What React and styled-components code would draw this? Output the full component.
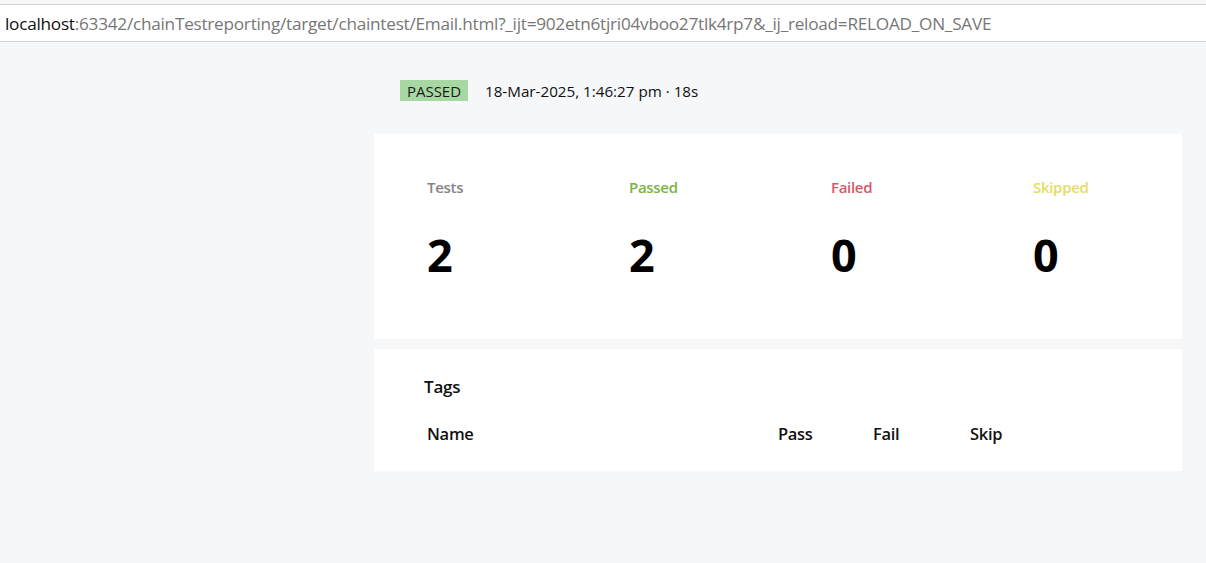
import React from "react";
import styled, { createGlobalStyle } from "styled-components";

const Global = createGlobalStyle`
  html, body { margin: 0; padding: 0; }
  body {
    background: #f6f7f9;
    font-family: "Open Sans", "Noto Sans", sans-serif;
    color: #111;
  }
`;

const Page = styled.div`
  width: 1206px;
  height: 563px;
  overflow: hidden;
  background: #f6f7f9;
`;

const AddressBar = styled.div`
  height: 36px;
  margin-top: 4px;
  background: #fff;
  border-top: 1px solid #d4d4d4;
  border-bottom: 1px solid #d4d4d4;
  display: flex;
  align-items: center;
  padding-left: 5px;
  font-family: "Open Sans", sans-serif;
  font-size: 17.2px;
  letter-spacing: -0.25px;
  color: #777;
  white-space: nowrap;
`;

const Host = styled.span`
  color: #111;
`;

const Main = styled.main`
  width: 808px;
  margin: 0 0 0 374px;
  padding-top: 38px;
  display: flex;
  flex-direction: column;
`;

const Header = styled.div`
  display: flex;
  align-items: center;
  gap: 17px;
  padding-left: 26px;
  height: 21px;
`;

const Badge = styled.span`
  display: inline-flex;
  align-items: center;
  justify-content: center;
  width: 68px;
  height: 21px;
  background: #a7d8a2;
  color: #1a1a1a;
  font-size: 15px;
  letter-spacing: 0;
`;

const Meta = styled.span`
  font-size: 15.2px;
  letter-spacing: 0;
  color: #111;
`;

const Card = styled.section`
  background: #fff;
  margin-top: ${(p) => p.$gap}px;
  height: ${(p) => p.$h}px;
  box-sizing: border-box;
`;

const StatGrid = styled.div`
  display: grid;
  grid-template-columns: repeat(4, 1fr);
  padding-top: 43px;
`;

const Stat = styled.div`
  padding-left: 53px;
  display: flex;
  flex-direction: column;
`;

const StatLabel = styled.div`
  font-size: 15px;
  font-weight: 600;
  color: ${(p) => p.$color};
  letter-spacing: -0.3px;
  height: 20px;
  line-height: 20px;
`;

const StatValue = styled.div`
  margin-top: 28px;
  font-size: 45px;
  font-weight: 700;
  line-height: 60px;
  color: #000;
`;

const TagsInner = styled.div`
  padding: 26px 0 0 50px;
`;

const TagsTitle = styled.h3`
  margin: 0;
  font-size: 17px;
  font-weight: 600;
  letter-spacing: -0.2px;
  line-height: 24px;
`;

const TableHead = styled.div`
  display: grid;
  grid-template-columns: 351px 95px 97px 80px;
  margin-top: 23px;
  padding-left: 3px;
  font-size: 16.5px;
  font-weight: 600;
  letter-spacing: -0.3px;
  line-height: 24px;
`;

const stats = [
  { label: "Tests", value: 2, color: "#858585" },
  { label: "Passed", value: 2, color: "#7cb342" },
  { label: "Failed", value: 0, color: "#d9596a" },
  { label: "Skipped", value: 0, color: "#e3dd60" },
];

export default function App() {
  return (
    <Page>
      <Global />
      <AddressBar>
        <Host>localhost</Host>
        :63342/chainTestreporting/target/chaintest/Email.html?_ijt=902etn6tjri04vboo27tlk4rp7&amp;_ij_reload=RELOAD_ON_SAVE
      </AddressBar>
      <Main>
        <Header>
          <Badge>PASSED</Badge>
          <Meta>18-Mar-2025, 1:46:27 pm · 18s</Meta>
        </Header>
        <Card $gap={33} $h={205}>
          <StatGrid>
            {stats.map((s) => (
              <Stat key={s.label}>
                <StatLabel $color={s.color}>{s.label}</StatLabel>
                <StatValue>{s.value}</StatValue>
              </Stat>
            ))}
          </StatGrid>
        </Card>
        <Card $gap={10} $h={122}>
          <TagsInner>
            <TagsTitle>Tags</TagsTitle>
            <TableHead>
              <span>Name</span>
              <span>Pass</span>
              <span>Fail</span>
              <span>Skip</span>
            </TableHead>
          </TagsInner>
        </Card>
      </Main>
    </Page>
  );
}
